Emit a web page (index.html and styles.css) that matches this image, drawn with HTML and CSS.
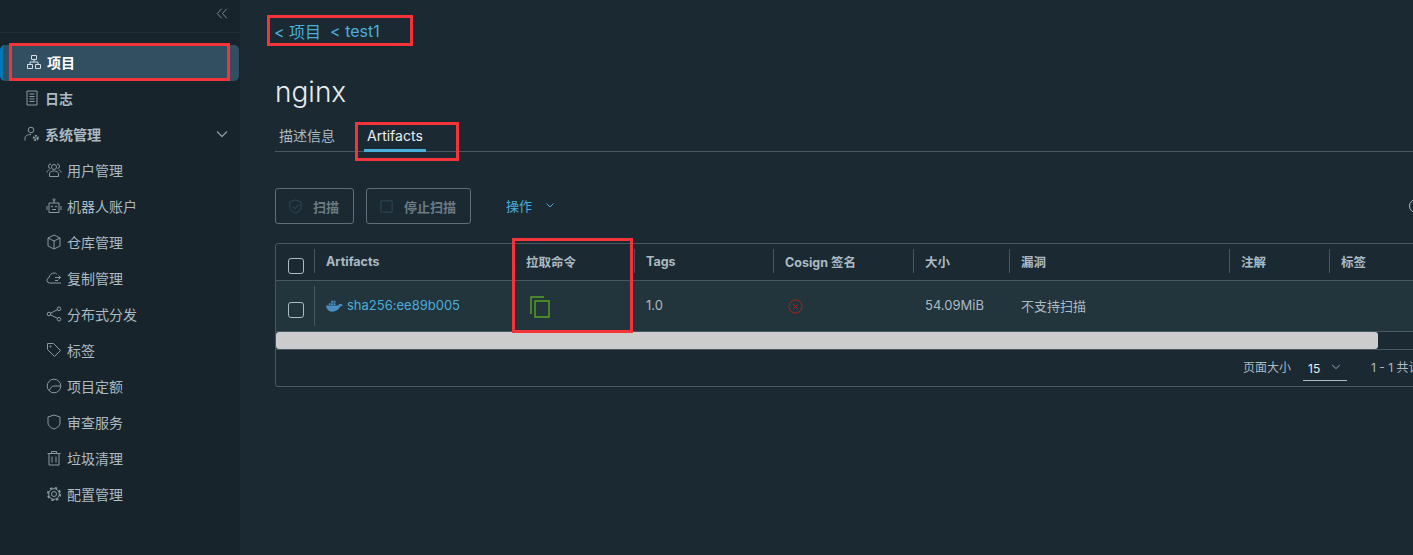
FILE: index.html
```html
<!DOCTYPE html>
<html lang="en">
<head>
  <meta charset="UTF-8">
  <meta name="viewport" content="width=device-width, initial-scale=1.0">
  <title>Harbor</title>
  <link rel="stylesheet" href="styles.css">
</head>
<body>
  <!-- Sidebar -->
  <nav class="sidebar">
    <div class="collapse-row">
      <svg class="icon collapse-icon" viewBox="0 0 14 14"><path d="M6.5 1.5 1.5 7l5 5.5M12.5 1.5 7.500 7l5 5.500"/></svg>
    </div>
    <div class="nav-list">
      <a class="nav-item active">
        <svg class="icon" viewBox="0 0 16 16"><path d="M5.500 1.500h5v4h-5zM1.500 10.500h5v4h-5zM9.500 10.500h5v4h-5zM4 10.500V8h8v2.500M8 5.500V8"/></svg>
        <span>项目</span>
      </a>
      <a class="nav-item">
        <svg class="icon" viewBox="0 0 16 16"><path d="M3 1h10v14H3zM5.500 4h5M5.500 6.500h5M5.500 9h5M5.500 11.500h5"/></svg>
        <span>日志</span>
      </a>
      <a class="nav-item nav-parent">
        <svg class="icon" viewBox="0 0 16 16"><circle cx="7" cy="4" r="2.800"/><path d="M1 14.500v-2.500c0-2 2.500-3.500 6-3.500"/><circle cx="11.800" cy="12" r="1.800" stroke-width="2.400" stroke-dasharray="1.500 .8"/></svg>
        <span>系统管理</span>
        <svg class="icon chevron" viewBox="0 0 12 12"><path d="M1 3.500 6 8.500 11 3.500"/></svg>
      </a>
      <a class="nav-item sub">
        <svg class="icon" viewBox="0 0 16 16"><circle cx="8" cy="5" r="2.500"/><path d="M3.500 14.500v-2.500c0-2 2-3 4.500-3s4.500 1 4.500 3v2.500zM4.500 6.500A2 2 0 1 1 5 2M11.500 6.500A2 2 0 1 0 11 2M1 10.500c0-1.500 1-2.500 2.500-2.500M15 10.500c0-1.500-1-2.500-2.500-2.500"/></svg>
        <span>用户管理</span>
      </a>
      <a class="nav-item sub">
        <svg class="icon" viewBox="0 0 16 16"><circle cx="8" cy="1.800" r="1"/><path d="M8 3v2M3 5h10v9.500H3zM1 8v4M15 8v4M6 11.500h4"/><circle cx="6" cy="8.500" r=".6"/><circle cx="10" cy="8.500" r=".6"/></svg>
        <span>机器人账户</span>
      </a>
      <a class="nav-item sub">
        <svg class="icon" viewBox="0 0 16 16"><path d="M8 1l6 3v8l-6 3-6-3V4zM2 4l6 3 6-3M8 7v8"/></svg>
        <span>仓库管理</span>
      </a>
      <a class="nav-item sub">
        <svg class="icon" viewBox="0 0 16 16"><path d="M15 13H3.500a2.700 2.700 0 0 1-.5-5.300C3.500 5 5.500 3 8 3c1 0 2 .3 2.800 1M9 7.500h5.500M12.500 5.500l2 2-2 2M9 10.500h3"/></svg>
        <span>复制管理</span>
      </a>
      <a class="nav-item sub">
        <svg class="icon" viewBox="0 0 16 16"><circle cx="3" cy="8" r="1.800"/><circle cx="13" cy="2.800" r="1.800"/><circle cx="13" cy="13.200" r="1.800"/><path d="M4.600 7.200 11.400 3.700M4.600 8.800l6.800 3.500"/></svg>
        <span>分布式分发</span>
      </a>
      <a class="nav-item sub">
        <svg class="icon" viewBox="0 0 16 16"><path d="M1.500 1.500h6l7 7-6 6-7-7z"/><circle cx="4.500" cy="4.500" r=".6"/></svg>
        <span>标签</span>
      </a>
      <a class="nav-item sub">
        <svg class="icon" viewBox="0 0 16 16"><circle cx="8" cy="8" r="6.800"/><path d="M3.500 12.500C4.500 9.500 6 8 8 8h6.500"/></svg>
        <span>项目定额</span>
      </a>
      <a class="nav-item sub">
        <svg class="icon" viewBox="0 0 16 16"><path d="M8 1l6 2v6c0 3-3 5-6 6-3-1-6-3-6-6V3z"/></svg>
        <span>审查服务</span>
      </a>
      <a class="nav-item sub">
        <svg class="icon" viewBox="0 0 16 16"><path d="M1.500 3.500h13M5.500 3.500V1.500h5v2M3 3.500v11.500h10V3.500M6 6.500v6M10 6.500v6"/></svg>
        <span>垃圾清理</span>
      </a>
      <a class="nav-item sub">
        <svg class="icon" viewBox="0 0 16 16"><circle cx="8" cy="8" r="2.500"/><circle cx="8" cy="8" r="5.300"/><circle cx="8" cy="8" r="6.300" stroke-width="1.600" stroke-dasharray="2.500 2.450"/></svg>
        <span>配置管理</span>
      </a>
    </div>
  </nav>

  <!-- Main -->
  <main class="content">
    <div class="breadcrumb"><a>&lt; 项目</a><a>&lt; test1</a></div>
    <h1>nginx</h1>
    <div class="tabs">
      <a class="tab">描述信息</a>
      <a class="tab current">Artifacts</a>
    </div>

    <div class="toolbar">
      <button class="btn">
        <svg class="icon btn-icon" viewBox="0 0 16 16"><path d="M8 1l6 2v6c0 3-3 5-6 6-3-1-6-3-6-6V3zM5 8l2.500 2.500L11 6"/></svg>
        扫描
      </button>
      <button class="btn">
        <svg class="icon btn-icon" viewBox="0 0 16 16"><path d="M2 2h12v12H2z"/></svg>
        停止扫描
      </button>
      <a class="actions">操作
        <svg class="icon" viewBox="0 0 12 12"><path d="M2.500 4.500 6 8 9.500 4.500"/></svg>
      </a>
      <svg class="icon refresh" viewBox="0 0 16 16"><circle cx="8" cy="8" r="6.500"/></svg>
    </div>

    <div class="datagrid">
      <div class="grid-row head">
        <div class="cell check"><span class="checkbox"></span></div>
        <div class="cell">Artifacts</div>
        <div class="cell">拉取命令</div>
        <div class="cell">Tags</div>
        <div class="cell">Cosign 签名</div>
        <div class="cell">大小</div>
        <div class="cell">漏洞</div>
        <div class="cell">注解</div>
        <div class="cell">标签</div>
      </div>
      <div class="grid-row body">
        <div class="cell check"><span class="checkbox"></span></div>
        <div class="cell link">
          <svg class="whale" viewBox="0 0 18 13"><path d="M0 6.500h13c.500-1.500 1.500-2 2.500-1.500 1 .1 1.800.5 2.300 1-.5 1-1.500 1.500-2.800 1.500C13.500 11 10.500 13 6.500 13 2.500 13 .5 10 0 6.500z"/><path d="M3 4h2v2H3zM5.500 4h2v2h-2zM8 4h2v2H8zM8 1.500h2v2H8zM5.500 1.500h2v2h-2z"/></svg>
          sha256:ee89b005
        </div>
        <div class="cell">
          <svg class="copy" viewBox="0 0 20 22"><path d="M14 1H1v17M5 5h14v16H5z"/></svg>
        </div>
        <div class="cell">1.0</div>
        <div class="cell">
          <svg class="error" viewBox="0 0 16 16"><circle cx="8" cy="8" r="7"/><path d="M5.300 5.300l5.400 5.400M10.700 5.300l-5.400 5.400"/></svg>
        </div>
        <div class="cell">54.09MiB</div>
        <div class="cell">不支持扫描</div>
        <div class="cell"></div>
        <div class="cell"></div>
      </div>
      <div class="scrollbar"><div class="scroll-thumb"></div></div>
      <div class="grid-footer">
        <span>页面大小</span>
        <span class="page-size"><span class="page-num">15</span>
          <svg class="icon" viewBox="0 0 12 12"><path d="M1.500 3.500 6 8 10.500 3.500"/></svg>
        </span>
        <span class="page-count">1 - 1 共计 1 条记录</span>
      </div>
    </div>
  </main>

  <!-- Red annotation boxes -->
  <div class="mark mark-nav"></div>
  <div class="mark mark-crumb"></div>
  <div class="mark mark-tab"></div>
  <div class="mark mark-pull"></div>
</body>
</html>
```

FILE: styles.css
```css
* {
  margin: 0;
  padding: 0;
  box-sizing: border-box;
}

html, body {
  height: 100%;
  overflow: hidden;
}

body {
  display: flex;
  background: #1b2a32;
  color: #acbac3;
  font-family: Inter, "Noto Sans CJK SC", sans-serif;
  font-size: 13px;
}

.icon {
  fill: none;
  stroke: currentColor;
  stroke-width: 1;
  flex: none;
}

/* Sidebar */
.sidebar {
  width: 240px;
  flex: none;
  background: #17242b;
  color: #acbac3;
}

.collapse-row {
  height: 33px;
  display: flex;
  justify-content: flex-end;
  align-items: center;
  padding: 0 12px 5px 0;
  border-bottom: 1px solid #1f2f38;
}

.collapse-icon {
  width: 12px;
  height: 13px;
  color: #8a99a3;
}

.nav-list {
  padding-top: 12px;
}

.nav-item {
  height: 36px;
  display: flex;
  align-items: center;
  gap: 5px;
  padding-left: 24px;
  padding-bottom: 2px;
  font-size: 14px;
  font-weight: 700;
}

.nav-item .icon {
  width: 16px;
  height: 16px;
  color: #8a99a3;
}

.nav-item.active {
  width: 239px;
  padding-left: 26px;
  background: #324f61;
  color: #fff;
  border-left: 3px solid #0079b8;
  border-radius: 5px;
}

.nav-item.active .icon {
  color: #d5dde2;
  margin-left: -3px;
}

.nav-parent .chevron {
  width: 12px;
  height: 12px;
  margin-left: auto;
  margin-right: 12px;
  stroke-width: 1.300;
}

.nav-item.sub {
  padding-left: 46px;
  font-weight: 400;
}

/* Main */
.content {
  flex: 1;
  min-width: 0;
  padding: 20px 0 0 35px;
}

.breadcrumb {
  display: flex;
  gap: 9px;
  height: 22px;
  align-items: center;
  margin-left: -1px;
  font-size: 16px;
  color: #4aaed9;
}

h1 {
  margin-top: 32px;
  height: 36px;
  font-size: 28px;
  line-height: 36px;
  font-weight: 300;
  color: #e9ecef;
}

.tabs {
  display: flex;
  gap: 29px;
  margin-top: 12px;
  height: 30px;
  padding-left: 4px;
  border-bottom: 1px solid #485764;
  font-size: 14px;
}

.tab {
  line-height: 28px;
}

.tab.current {
  color: #eaedf0;
  height: 30px;
  padding: 0 3px;
  border-bottom: 3px solid #4aaed9;
}

.toolbar {
  display: flex;
  align-items: center;
  margin-top: 36px;
  height: 36px;
}

.btn {
  display: flex;
  align-items: center;
  height: 36px;
  margin-right: 12px;
  padding: 0 14px 0 12px;
  gap: 10px;
  background: none;
  border: 1px solid #5f6d77;
  border-radius: 3px;
  color: #6c7a84;
  font: 700 13px Inter, "Noto Sans CJK SC", sans-serif;
}

.btn-icon {
  width: 15px;
  height: 15px;
  color: #2f4a5b;
}

.actions {
  display: flex;
  align-items: center;
  gap: 12px;
  margin-left: 23px;
  padding-bottom: 2px;
  color: #4aaed9;
  font-size: 13px;
}

.actions .icon {
  width: 12px;
  height: 12px;
}

.refresh {
  position: relative;
  margin-left: auto;
  margin-right: -11px;
  width: 16px;
  height: 16px;
}

/* Table */
.datagrid {
  width: 1200px;
  height: 144px;
  margin-top: 19px;
  border: 1px solid #485764;
  border-radius: 3px;
}

.grid-row {
  display: grid;
  grid-template-columns: 38px 200px 120px 139px 140px 96px 220px 100px 1fr;
  border-bottom: 1px solid #485764;
}

.head {
  height: 37px;
  font-size: 12.500px;
  font-weight: 700;
  color: #acbac3;
}

.head .cell {
  height: 24px;
  margin-top: 5px;
  border-left: 1px solid #485764;
}

.head .cell.check, .body .cell.check {
  border-left: 0;
}

.body {
  height: 51px;
  background: #22343c;
}

.cell {
  display: flex;
  align-items: center;
  padding-left: 11px;
  min-width: 0;
  white-space: nowrap;
}

.body .cell {
  padding-left: 12px;
  padding-bottom: 2px;
}

.cell.check {
  padding-left: 12px;
  position: relative;
}

.body .cell:nth-child(2) {
  border-left: 1px solid #485764;
  margin: 5px 0;
  padding-left: 11px;
}

.checkbox {
  width: 16px;
  height: 16px;
  border: 1px solid #acbac3;
  border-radius: 3px;
  margin-top: 9px;
}

.body .checkbox {
  margin-top: 10px;
}

.link {
  color: #4aaed9;
  gap: 4px;
}

.whale {
  width: 17px;
  height: 13px;
  fill: #4a8fc4;
}

.copy {
  width: 20px;
  height: 22px;
  margin: 4px 0 0 4px;
  fill: none;
  stroke: #5aa220;
  stroke-width: 1.400;
}

.error {
  width: 15px;
  height: 15px;
  margin: 2px 0 0 3px;
  fill: none;
  stroke: #d0200a;
  stroke-width: .8;
}

.scrollbar {
  height: 18px;
  border-bottom: 1px solid #485764;
}

.scroll-thumb {
  width: 1102px;
  height: 17px;
  background: #cccccc;
  border-radius: 3px;
}

.grid-footer {
  display: flex;
  align-items: center;
  height: 37px;
  padding-left: 967px;
  padding-bottom: 5px;
  font-size: 12px;
  white-space: nowrap;
}

.page-size {
  display: flex;
  align-items: center;
  gap: 11px;
  width: 44px;
  height: 26px;
  margin: 3px 0 0 12px;
  padding-left: 5px;
  border-bottom: 1px solid #acbac3;
  color: #eaedf0;
}

.page-num {
  margin-top: 2px;
}

.page-size .icon {
  width: 10px;
  height: 10px;
  color: #acbac3;
}

.page-count {
  margin-left: 24px;
}

/* Red annotation boxes */
.mark {
  position: absolute;
  border: 3px solid #f5343a;
}

.mark-nav { left: 9px; top: 43px; width: 221px; height: 38px; }
.mark-crumb { left: 267px; top: 15px; width: 146px; height: 31px; }
.mark-tab { left: 355px; top: 122px; width: 104px; height: 39px; }
.mark-pull { left: 512px; top: 238px; width: 121px; height: 95px; }
```
